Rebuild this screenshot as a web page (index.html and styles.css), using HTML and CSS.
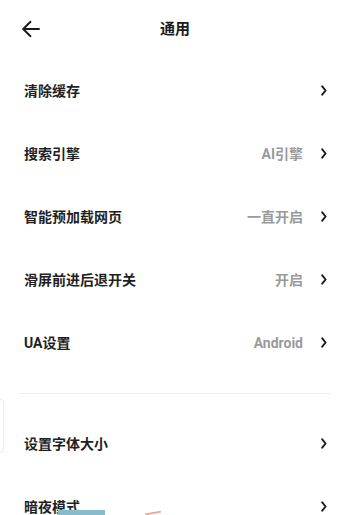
FILE: index.html
```html
<!DOCTYPE html>
<html lang="zh-CN">
<head>
<meta charset="utf-8">
<link rel="stylesheet" href="styles.css">
</head>
<body>
<div class="page">
  <header class="header">
    <span class="back">
      <svg width="19" height="18" viewBox="0 0 19 18"><path d="M18 9H2.5M9.5 1.8L2.2 9l7.3 7.2" fill="none" stroke="#1a1a1a" stroke-width="1.9" stroke-linecap="round" stroke-linejoin="round"/></svg>
    </span>
    <h1 class="title">通用</h1>
  </header>
  <ul class="list">
    <li class="row"><span class="label">清除缓存</span><span class="value"></span><svg class="chev" width="6" height="11" viewBox="0 0 6 11"><path d="M1.2 1.3L4.6 5.5 1.2 9.7" fill="none" stroke="#1a1a1a" stroke-width="1.9" stroke-linecap="round" stroke-linejoin="round"/></svg></li>
    <li class="row"><span class="label">搜索引擎</span><span class="value">AI引擎</span><svg class="chev" width="6" height="11" viewBox="0 0 6 11"><path d="M1.2 1.3L4.6 5.5 1.2 9.7" fill="none" stroke="#1a1a1a" stroke-width="1.9" stroke-linecap="round" stroke-linejoin="round"/></svg></li>
    <li class="row"><span class="label">智能预加载网页</span><span class="value">一直开启</span><svg class="chev" width="6" height="11" viewBox="0 0 6 11"><path d="M1.2 1.3L4.6 5.5 1.2 9.7" fill="none" stroke="#1a1a1a" stroke-width="1.9" stroke-linecap="round" stroke-linejoin="round"/></svg></li>
    <li class="row"><span class="label">滑屏前进后退开关</span><span class="value">开启</span><svg class="chev" width="6" height="11" viewBox="0 0 6 11"><path d="M1.2 1.3L4.6 5.5 1.2 9.7" fill="none" stroke="#1a1a1a" stroke-width="1.9" stroke-linecap="round" stroke-linejoin="round"/></svg></li>
    <li class="row"><span class="label">UA设置</span><span class="value">Android</span><svg class="chev" width="6" height="11" viewBox="0 0 6 11"><path d="M1.2 1.3L4.6 5.5 1.2 9.7" fill="none" stroke="#1a1a1a" stroke-width="1.9" stroke-linecap="round" stroke-linejoin="round"/></svg></li>
  </ul>
  <div class="divider"></div>
  <ul class="list">
    <li class="row"><span class="label">设置字体大小</span><span class="value"></span><svg class="chev" width="6" height="11" viewBox="0 0 6 11"><path d="M1.2 1.3L4.6 5.5 1.2 9.7" fill="none" stroke="#1a1a1a" stroke-width="1.9" stroke-linecap="round" stroke-linejoin="round"/></svg></li>
    <li class="row"><span class="label">暗夜模式</span><span class="value"></span><svg class="chev" width="6" height="11" viewBox="0 0 6 11"><path d="M1.2 1.3L4.6 5.5 1.2 9.7" fill="none" stroke="#1a1a1a" stroke-width="1.9" stroke-linecap="round" stroke-linejoin="round"/></svg></li>
  </ul>
  <div class="edge-box"></div>
  <div class="teal-strip"></div>
  <div class="red-stroke"></div>
</div>
</body>
</html>
```
FILE: styles.css
```css
* { box-sizing: border-box; }
html, body {
  margin: 0;
  padding: 0;
  background: #fff;
}
body {
  font-family: Roboto, "Noto Sans CJK SC", sans-serif;
  color: #1f1f1f;
}
.page {
  position: relative;
  width: 350px;
  height: 515px;
  overflow: hidden;
}
.header {
  position: relative;
  height: 59px;
  display: flex;
  align-items: center;
  justify-content: center;
}
.back {
  position: absolute;
  left: 21px;
  top: 20px;
  display: flex;
}
.title {
  margin: 0;
  font-size: 15px;
  font-weight: 700;
  line-height: 1;
  color: #1a1a1a;
}
.list {
  list-style: none;
  margin: 0;
  padding: 0;
}
.row {
  height: 63px;
  display: flex;
  align-items: center;
  padding: 0 23px 0 24px;
}
.label {
  flex: 1;
  font-size: 14px;
  font-weight: 700;
  line-height: 1;
  color: #1f1f1f;
}
.value {
  font-size: 14px;
  font-weight: 700;
  line-height: 1;
  color: #9a9a9a;
  margin-right: 18px;
}
.chev {
  display: block;
}
.divider {
  height: 1px;
  background: #ededed;
  margin: 19px 20px 18px 19px;
}
.edge-box {
  position: absolute;
  left: -10px;
  top: 399px;
  width: 14px;
  height: 54px;
  border: 1px solid #ececec;
  border-radius: 3px;
}
.teal-strip {
  position: absolute;
  left: 58px;
  top: 510px;
  width: 47px;
  height: 6px;
  background: #86bccb;
}
.red-stroke {
  position: absolute;
  left: 145px;
  top: 512px;
  width: 16px;
  height: 2px;
  background: #f2a596;
  transform: rotate(-10deg);
}
```
